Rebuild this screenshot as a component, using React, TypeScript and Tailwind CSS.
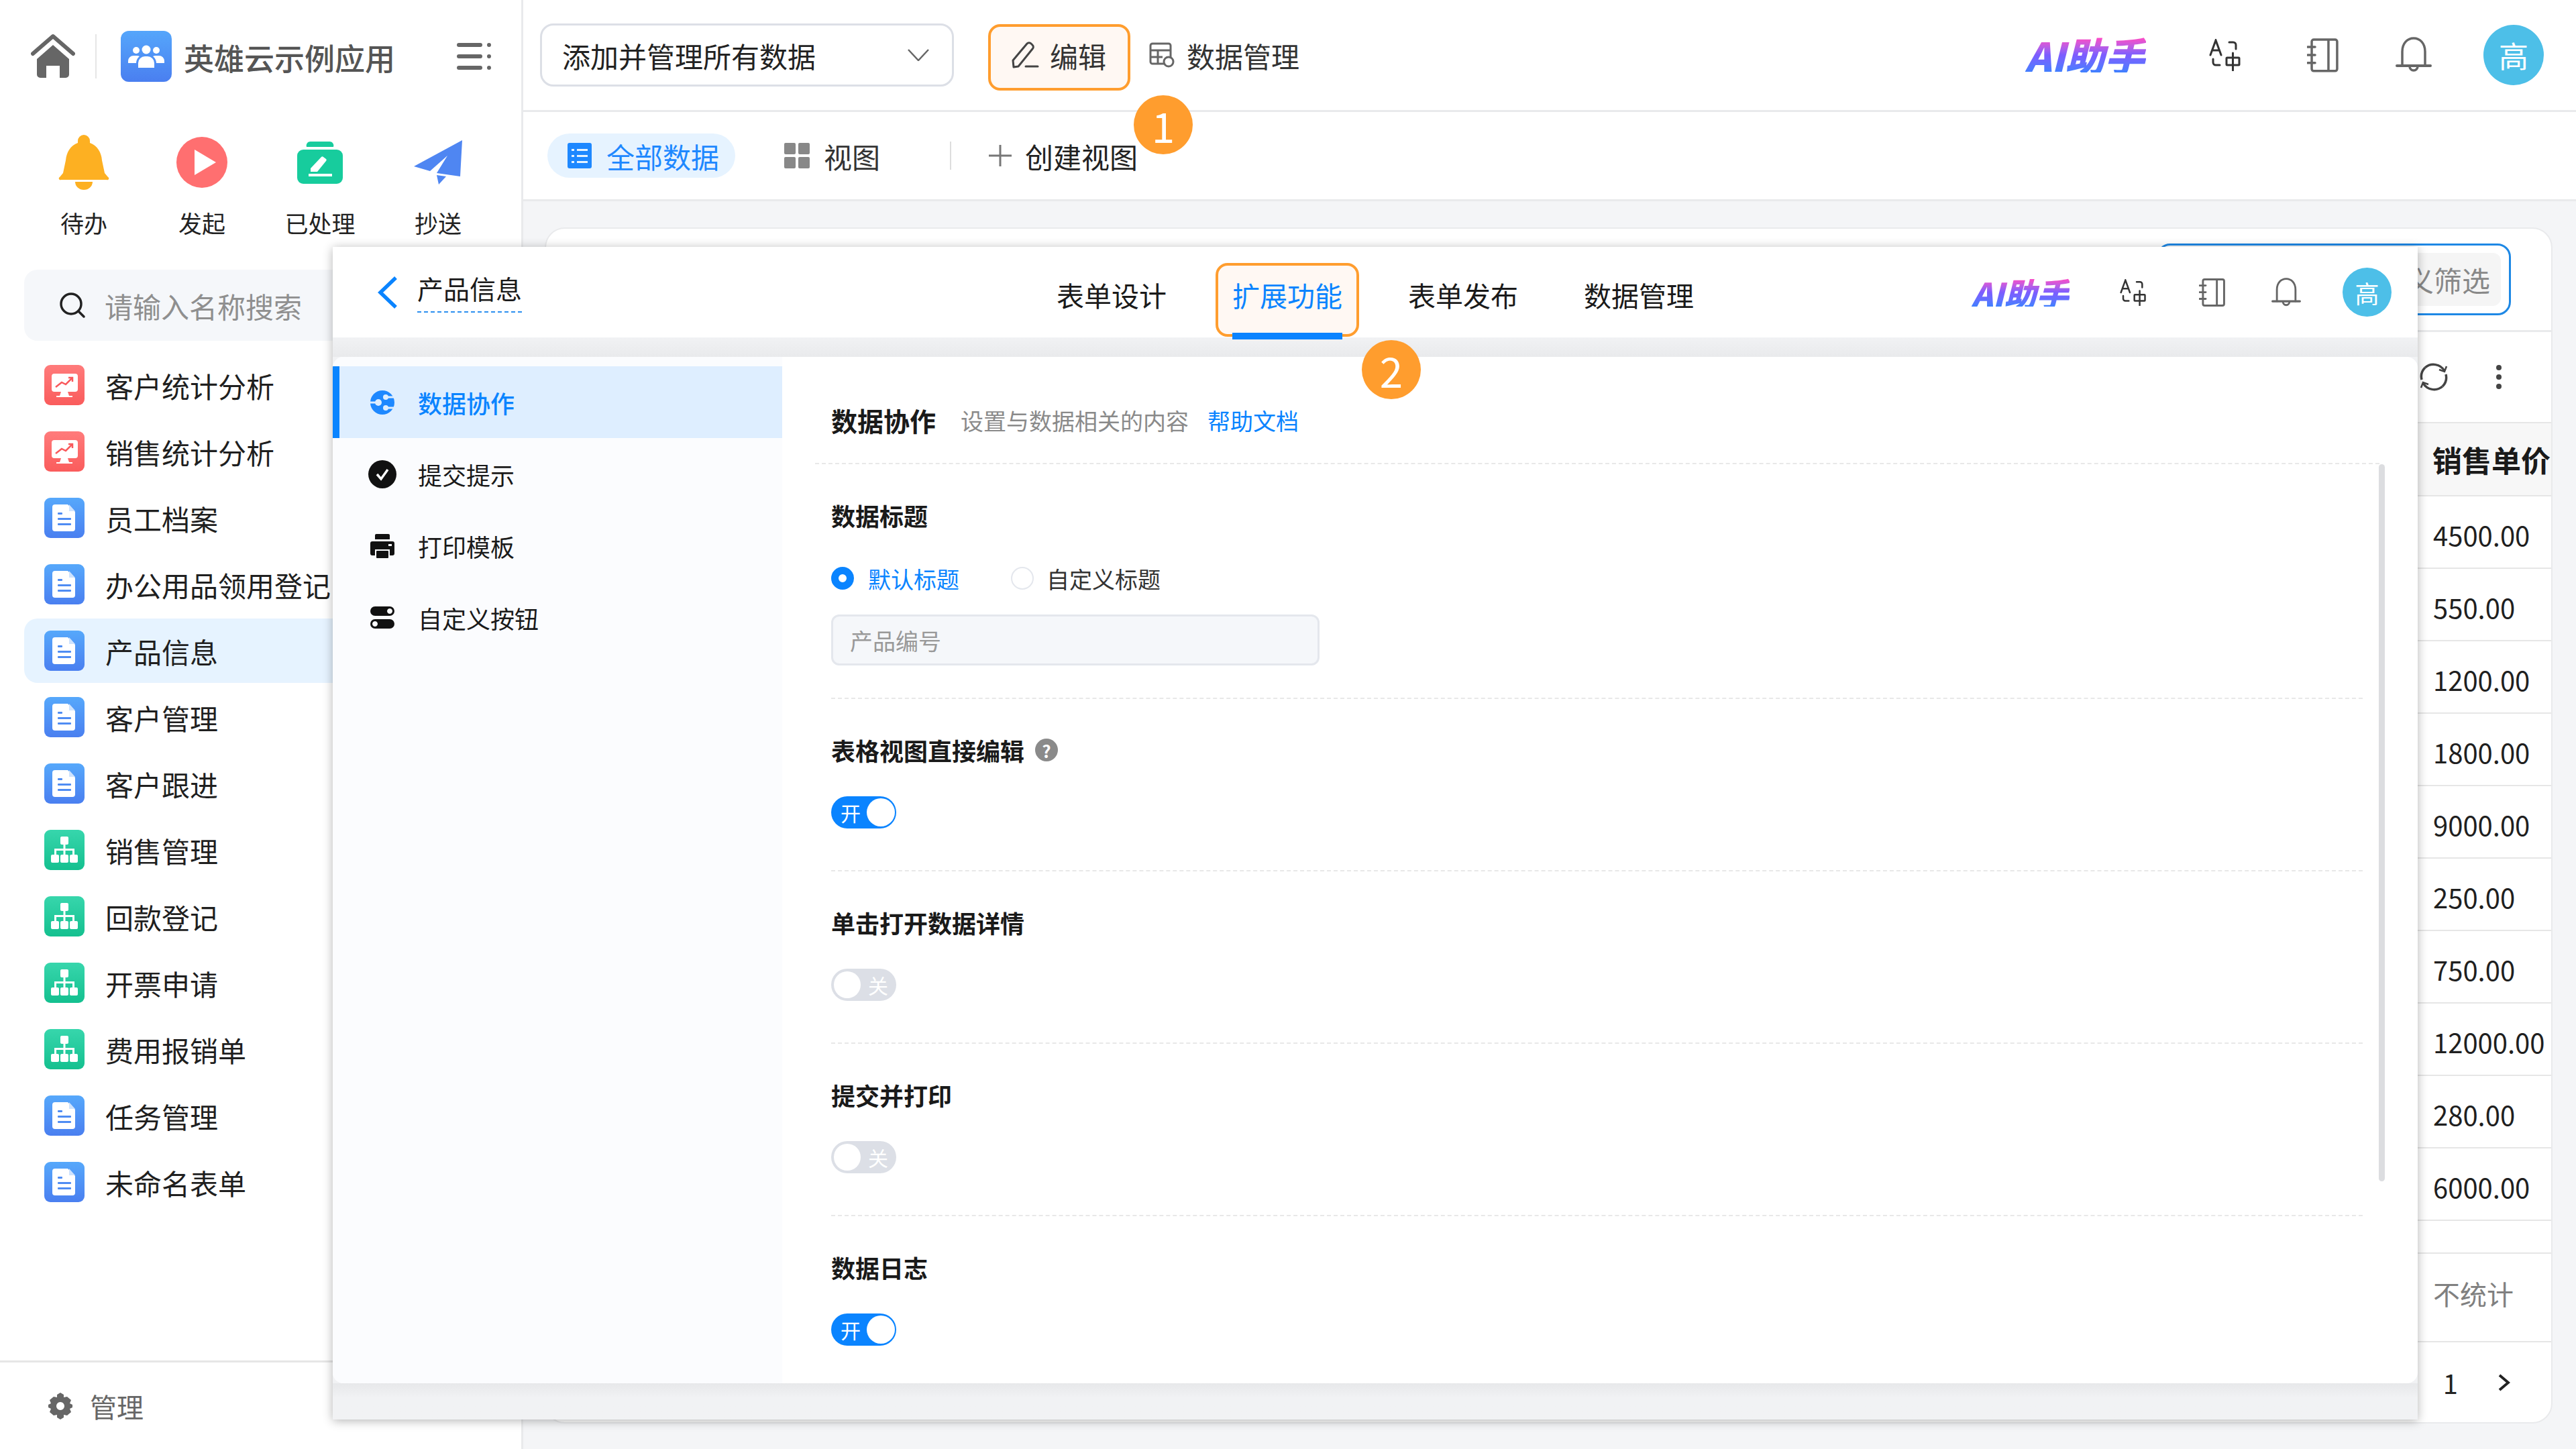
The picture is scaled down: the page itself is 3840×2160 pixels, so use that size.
const FONT = "font-['Noto_Sans_CJK_SC','Noto_Sans',sans-serif]";

function HomeIcon() {
  return (
    <svg width="66" height="68" viewBox="0 0 66 68" fill="#666">
      <path d="M3 30 L33 4 L63 30" fill="none" stroke="#666" strokeWidth="6" strokeLinecap="round" strokeLinejoin="round" />
      <path d="M9 38 L33 17 L57 38 V61 a5 5 0 0 1 -5 5 H43 V48 H23 V66 H14 a5 5 0 0 1 -5 -5 Z" />
    </svg>
  );
}

function AppLogo() {
  return (
    <svg width="76" height="76" viewBox="0 0 76 76">
      <defs>
        <linearGradient id="lg-app" x1="0" y1="0" x2="0" y2="1">
          <stop offset="0" stopColor="#55a6fb" />
          <stop offset="1" stopColor="#4a7ff0" />
        </linearGradient>
      </defs>
      <rect width="76" height="76" rx="12" fill="url(#lg-app)" />
      <g fill="#fff">
        <circle cx="38" cy="28" r="6.5" />
        <circle cx="23" cy="29" r="5" />
        <circle cx="53" cy="29" r="5" />
        <path d="M26 55 v-7 a10 10 0 0 1 10 -10 h4 a10 10 0 0 1 10 10 v7 Z" />
        <path d="M11 48 v-3 a8 8 0 0 1 8 -8 h5 a8 8 0 0 1 4 1 a13 13 0 0 0 -5 10 Z" />
        <path d="M65 48 v-3 a8 8 0 0 0 -8 -8 h-5 a8 8 0 0 0 -4 1 a13 13 0 0 1 5 10 Z" />
      </g>
    </svg>
  );
}

function MenuIcon() {
  return (
    <svg width="52" height="40" viewBox="0 0 52 40" fill="#666">
      <rect x="0" y="0" width="38" height="6" rx="3" />
      <rect x="0" y="17" width="38" height="6" rx="3" />
      <rect x="0" y="34" width="38" height="6" rx="3" />
      <circle cx="48" cy="3" r="3" />
      <circle cx="48" cy="20" r="3" />
      <circle cx="48" cy="37" r="3" />
    </svg>
  );
}

function BellFilled() {
  return (
    <svg width="76" height="82" viewBox="0 0 76 82" fill="#fdb022">
      <path d="M38 0 a9 9 0 0 1 9 9 v3 c11 4 17 14 18 26 l4 19 l5 6 a2 2 0 0 1 -2 4 H4 a2 2 0 0 1 -2 -4 l5 -6 l4 -19 c1 -12 7 -22 18 -26 V9 a9 9 0 0 1 9 -9 Z" />
      <path d="M25 70 H51 a13 12 0 0 1 -26 0 Z" />
    </svg>
  );
}

function PlayFilled() {
  return (
    <svg width="76" height="76" viewBox="0 0 76 76">
      <circle cx="38" cy="38" r="38" fill="#ff6f70" />
      <path d="M27 19 L59 38 L27 57 Z" fill="#fff" />
    </svg>
  );
}

function DoneFilled() {
  return (
    <svg width="68" height="64" viewBox="0 0 68 64">
      <path d="M14 9 a6 6 0 0 1 6 -8 h28 a6 6 0 0 1 6 8 Z" fill="#17cc9d" />
      <rect x="0" y="13" width="68" height="51" rx="9" fill="#17cc9d" />
      <path d="M20 41 L36 24 a2 2 0 0 1 3 0 l4 3 a2 2 0 0 1 0 3 L30 46 H20 Z" fill="#fff" />
      <rect x="17" y="49" width="35" height="4" fill="#fff" />
    </svg>
  );
}

function PlaneFilled() {
  return (
    <svg width="73" height="66" viewBox="0 0 73 66" fill="#4f86f2">
      <path d="M72 0 L0 39 L24 46 L50 23 L34 49 L69 54 Z" />
      <path d="M34 52 L48 54 L37 66 Z" />
    </svg>
  );
}

function ChartIcon() {
  return (
    <svg width="60" height="60" viewBox="0 0 60 60">
      <defs>
        <linearGradient id="lg-chart" x1="0" y1="0" x2="0" y2="1">
          <stop offset="0" stopColor="#ff7b7b" />
          <stop offset="1" stopColor="#fa5c5c" />
        </linearGradient>
      </defs>
      <rect width="60" height="60" rx="9" fill="url(#lg-chart)" />
      <rect x="11" y="13" width="39" height="27" rx="4" fill="#fff" />
      <path d="M25 40 h10 l2 6 h5 v2 H18 v-2 h5 Z" fill="#fff" />
      <path d="M17 33 L26 26 L32 29 L41 20" fill="none" stroke="#f9595c" strokeWidth="2.5" />
      <path d="M36 19 h6 v6" fill="none" stroke="#f9595c" strokeWidth="2.5" />
    </svg>
  );
}

function DocIcon() {
  return (
    <svg width="60" height="60" viewBox="0 0 60 60">
      <defs>
        <linearGradient id="lg-doc" x1="0" y1="0" x2="0" y2="1">
          <stop offset="0" stopColor="#56a8fb" />
          <stop offset="1" stopColor="#4a7ff0" />
        </linearGradient>
      </defs>
      <rect width="60" height="60" rx="9" fill="url(#lg-doc)" />
      <path d="M16 10 h19 l11 11 v25 a4 4 0 0 1 -4 4 H16 a4 4 0 0 1 -4 -4 V14 a4 4 0 0 1 4 -4 Z" fill="#fff" />
      <path d="M37 10 l9 10 h-9 Z" fill="#cfe3fd" />
      <g fill="#4f8cf3">
        <rect x="20" y="22" width="7" height="3" rx="1" />
        <rect x="20" y="30" width="20" height="3" rx="1" />
        <rect x="20" y="38" width="20" height="3" rx="1" />
      </g>
    </svg>
  );
}

function OrgIcon() {
  return (
    <svg width="60" height="60" viewBox="0 0 60 60">
      <defs>
        <linearGradient id="lg-org" x1="0" y1="0" x2="0" y2="1">
          <stop offset="0" stopColor="#37d6ac" />
          <stop offset="1" stopColor="#14c08f" />
        </linearGradient>
      </defs>
      <rect width="60" height="60" rx="9" fill="url(#lg-org)" />
      <g fill="#fff">
        <rect x="24" y="10" width="12" height="12" rx="2" />
        <rect x="10" y="37" width="12" height="12" rx="2" />
        <rect x="24" y="37" width="12" height="12" rx="2" />
        <rect x="38" y="37" width="12" height="12" rx="2" />
        <path d="M28.5 22 h3 v6 H45 v9 h-3 v-6 H31.5 v6 h-3 v-6 H18 v6 h-3 v-9 h13.5 Z" />
      </g>
    </svg>
  );
}

function TranslateIcon({ size }: { size: number }) {
  return (
    <svg width={size} height={size} viewBox="0 0 48 48" stroke="#333" fill="none" strokeWidth="3" strokeLinecap="round">
      <path d="M2 24 L10 2 L18 24 M5 17 H15" />
      <path d="M30 5 h6 a4 4 0 0 1 4 4 v6" />
      <path d="M6 30 v5 a4 4 0 0 0 4 4 h6" />
      <rect x="26" y="28" width="19" height="11" rx="1" />
      <path d="M35.5 21 V47" />
    </svg>
  );
}

function BookIcon({ size }: { size: number }) {
  return (
    <svg width={size} height={size * 1.1} viewBox="0 0 48 53" stroke="#666" fill="none" strokeWidth="3.5">
      <rect x="7" y="3" width="38" height="47" rx="3" />
      <path d="M32 3 V50" />
      <path d="M1 14 H12 M1 26 H12 M1 38 H12" strokeLinecap="round" />
    </svg>
  );
}

function BellOutline({ size }: { size: number }) {
  return (
    <svg width={size} height={size} viewBox="0 0 54 54" stroke="#666" fill="none" strokeWidth="3.5" strokeLinecap="round">
      <path d="M10 43 V22 C10 9 18 2 27 2 C36 2 44 9 44 22 V43" />
      <path d="M2 43 H52" strokeWidth="4" />
      <path d="M21 44 a6 6 0 0 0 12 0" />
    </svg>
  );
}

function AiBadge({ big }: { big?: boolean }) {
  return (
    <span className={`italic font-black whitespace-nowrap bg-gradient-to-b from-[#ff47c4] via-[#7b5cff] to-[#3d80ff] bg-clip-text text-transparent ${big ? "text-[59px] leading-[52px] w-[180px]" : "text-[48px] leading-[42px] w-[146px]"}`}>
      AI助手
    </span>
  );
}

function Avatar({ big }: { big?: boolean }) {
  return (
    <div className={`flex items-center justify-center rounded-full bg-[#4dbfe8] text-white ${big ? "w-[90px] h-[90px] text-[44px]" : "w-[73px] h-[73px] text-[36px]"}`}>高</div>
  );
}

function NumberBadge({ n, className }: { n: number; className: string }) {
  return (
    <div className={`absolute w-[88px] h-[88px] rounded-full bg-[#ff9d2e] text-white text-[62px] leading-none flex items-center justify-center ${className}`}>{n}</div>
  );
}

function Toggle({ on }: { on: boolean }) {
  return (
    <div className={`w-[97px] h-[48px] rounded-full flex items-center text-white text-[30px] ${on ? "bg-[#0a84ff] pl-[14px] pr-[2px] justify-between" : "bg-[#dcdfe6] pl-[4px] pr-[12px] justify-between"}`}>
      {on ? <span>开</span> : <span className="w-[40px] h-[40px] rounded-full bg-white" />}
      {on ? <span className="w-[42px] h-[42px] rounded-full bg-white" /> : <span>关</span>}
    </div>
  );
}

const menu = [
  { name: "客户统计分析", kind: "chart" },
  { name: "销售统计分析", kind: "chart" },
  { name: "员工档案", kind: "doc" },
  { name: "办公用品领用登记", kind: "doc" },
  { name: "产品信息", kind: "doc", active: true },
  { name: "客户管理", kind: "doc" },
  { name: "客户跟进", kind: "doc" },
  { name: "销售管理", kind: "org" },
  { name: "回款登记", kind: "org" },
  { name: "开票申请", kind: "org" },
  { name: "费用报销单", kind: "org" },
  { name: "任务管理", kind: "doc" },
  { name: "未命名表单", kind: "doc" },
];

const prices = ["4500.00", "550.00", "1200.00", "1800.00", "9000.00", "250.00", "750.00", "12000.00", "280.00", "6000.00"];

function Sidebar() {
  const quick = [
    { label: "待办", icon: <BellFilled /> },
    { label: "发起", icon: <PlayFilled /> },
    { label: "已处理", icon: <DoneFilled /> },
    { label: "抄送", icon: <PlaneFilled /> },
  ];
  return (
    <aside className="w-[780px] h-full shrink-0 bg-white border-r-[3px] border-[#e9eaec] flex flex-col">
      <div className="h-[167px] shrink-0 flex items-center pl-[46px]">
        <HomeIcon />
        <div className="w-[2px] h-[66px] bg-[#e6e6e6] ml-[30px] mr-[36px]" />
        <AppLogo />
        <span className="ml-[18px] pt-[4px] text-[45px] font-medium text-[#555]">英雄云示例应用</span>
        <div className="ml-[92px]"><MenuIcon /></div>
      </div>
      <div className="ml-[37px] w-[704px] grid grid-cols-4 pt-[34px]">
        {quick.map(q => (
          <div key={q.label} className="flex flex-col items-center">
            <div className="h-[82px] flex items-center justify-center">{q.icon}</div>
            <span className="mt-[27px] text-[35px] leading-[44px] text-[#222]">{q.label}</span>
          </div>
        ))}
      </div>
      <div className="mx-[36px] mt-[48px] h-[106px] shrink-0 rounded-[20px] bg-[#f5f7fa] flex items-center pl-[52px] gap-[28px]">
        <svg width="40" height="40" viewBox="0 0 40 40" fill="none" stroke="#222" strokeWidth="3.5" strokeLinecap="round">
          <circle cx="18" cy="18" r="15" />
          <path d="M29 29 L37 37" />
        </svg>
        <span className="text-[42px] text-[#8f8f8f]">请输入名称搜索</span>
      </div>
      <div className="mx-[36px] mt-[18px] flex flex-col gap-[3px] flex-1">
        {menu.map(m => (
          <div key={m.name} className={`h-[96px] shrink-0 flex items-center pl-[30px] gap-[31px] rounded-[20px] ${m.active ? "bg-[#e6f3ff]" : ""}`}>
            {m.kind === "chart" ? <ChartIcon /> : m.kind === "org" ? <OrgIcon /> : <DocIcon />}
            <span className="text-[42px] text-[#1f1f1f] whitespace-nowrap">{m.name}</span>
          </div>
        ))}
      </div>
      <div className="h-[132px] shrink-0 border-t-[3px] border-[#e6e6e6] flex items-center pl-[70px] gap-[24px] text-[#666]">
        <svg width="40" height="40" viewBox="0 0 40 40" fill="#666">
          <path fillRule="evenodd" d="M20 0 l5 3 v4 l5 -1 l6 5 l-2 5 l4 2 v4 l-4 2 l2 5 l-6 5 l-5 -1 v4 l-5 3 l-5 -3 v-4 l-5 1 l-6 -5 l2 -5 l-4 -2 v-4 l4 -2 l-2 -5 l6 -5 l5 1 V3 Z M20 14 a6 6 0 1 0 0.01 0 Z" />
        </svg>
        <span className="text-[40px]">管理</span>
      </div>
    </aside>
  );
}

function Topbar() {
  return (
    <>
      <header className="h-[167px] shrink-0 bg-white border-b-[3px] border-[#e9eaec] flex items-center pl-[25px] pr-[48px]">
        <div className="w-[617px] h-[94px] rounded-[20px] border-[3px] border-[#dcdfe6] flex items-center justify-between pl-[30px] pr-[34px]">
          <span className="text-[42px] text-[#222]">添加并管理所有数据</span>
          <svg width="32" height="18" viewBox="0 0 32 18" fill="none" stroke="#666" strokeWidth="2.5"><path d="M1 1 L16 17 L31 1" /></svg>
        </div>
        <div className="ml-[51px] mt-[6px] w-[212px] h-[99px] rounded-[18px] border-[4px] border-[#ff9d2e] bg-[#fff8f3] flex items-center pl-[30px] pb-[6px] gap-[16px]">
          <svg width="42" height="42" viewBox="0 0 42 42" fill="none" stroke="#444" strokeWidth="3" strokeLinejoin="round" strokeLinecap="round">
            <path d="M4 39 L3 29 L24 4 a4 4 0 0 1 6 0 l2 2 a4 4 0 0 1 0 6 L11 38 Z" />
            <path d="M22 38 H40" />
          </svg>
          <span className="text-[42px] text-[#333]">编辑</span>
        </div>
        <div className="ml-[28px] flex items-center gap-[18px]">
          <svg width="38" height="40" viewBox="0 0 38 40" fill="none" stroke="#666" strokeWidth="3">
            <rect x="2" y="3" width="30" height="30" rx="3" />
            <path d="M2 13 H32 M2 23 H20 M13 13 V33" />
            <circle cx="29" cy="30" r="7" fill="#fff" />
          </svg>
          <span className="text-[42px] text-[#333]">数据管理</span>
        </div>
        <div className="ml-auto flex items-center">
          <AiBadge big />
          <div className="ml-[94px]"><TranslateIcon size={48} /></div>
          <div className="ml-[98px]"><BookIcon size={48} /></div>
          <div className="ml-[84px]"><BellOutline size={54} /></div>
          <div className="ml-[77px]"><Avatar big /></div>
        </div>
      </header>
      <div className="h-[133px] shrink-0 bg-white border-b-[3px] border-[#e9eaec] flex items-center pl-[36px]">
        <div className="w-[280px] h-[66px] rounded-full bg-[#e6f3ff] flex items-center pl-[30px] gap-[22px]">
          <svg width="36" height="38" viewBox="0 0 36 38" fill="#1e88ff">
            <path fillRule="evenodd" d="M3 0 h30 a3 3 0 0 1 3 3 v32 a3 3 0 0 1 -3 3 H3 a3 3 0 0 1 -3 -3 V3 a3 3 0 0 1 3 -3 Z M6 9 v3 h4 V9 Z M14 9 v3 h16 V9 Z M6 18 v3 h4 v-3 Z M14 18 v3 h16 v-3 Z M6 27 v3 h4 v-3 Z M14 27 v3 h16 v-3 Z" />
          </svg>
          <span className="text-[42px] text-[#1e88ff]">全部数据</span>
        </div>
        <div className="ml-[73px] flex items-center gap-[21px]">
          <svg width="38" height="38" viewBox="0 0 38 38" fill="#888">
            <rect width="17" height="17" rx="2" />
            <rect x="21" width="17" height="17" rx="2" />
            <rect y="21" width="17" height="17" rx="2" />
            <rect x="21" y="21" width="17" height="17" rx="2" />
          </svg>
          <span className="text-[42px] text-[#333]">视图</span>
        </div>
        <div className="ml-[104px] w-[2px] h-[42px] bg-[#dddddd]" />
        <div className="ml-[56px] flex items-center gap-[20px]">
          <svg width="34" height="32" viewBox="0 0 34 32" stroke="#777" strokeWidth="3"><path d="M0 16 H34 M17 0 V32" /></svg>
          <span className="text-[42px] text-[#222]">创建视图</span>
        </div>
      </div>
    </>
  );
}

function DataCard() {
  return (
    <div className="h-[1783px] rounded-[30px] border-[2px] border-[#e9eaec] bg-white flex flex-col overflow-hidden">
      <div className="h-[154px] shrink-0 border-b-[3px] border-[#e9eaec] flex items-center justify-end pr-[60px]">
        <div className="w-[528px] h-[107px] rounded-[20px] border-[3px] border-[#1e88e5] flex items-center justify-end pr-[12px]">
          <div className="h-[79px] rounded-[12px] bg-[#f5f5f5] flex items-center pl-[104px] pr-[16px] text-[42px] text-[#888]">义筛选</div>
        </div>
      </div>
      <div className="h-[134px] shrink-0 flex items-center justify-end pr-[73px] gap-[70px]">
        <svg width="44" height="44" viewBox="0 0 44 44" fill="none" stroke="#444" strokeWidth="3.5">
          <path d="M38 13 A19 19 0 0 0 9 8" />
          <path d="M6 31 A19 19 0 0 0 35 36" />
          <path d="M4 26 A19 19 0 0 1 9 8" />
          <path d="M40 18 A19 19 0 0 1 35 36" />
          <path d="M41 6 L38 14 L30 11" strokeWidth="2.5" />
          <path d="M3 38 L6 30 L14 33" strokeWidth="2.5" />
        </svg>
        <svg width="10" height="38" viewBox="0 0 10 38" fill="#444"><circle cx="5" cy="5" r="4" /><circle cx="5" cy="19" r="4" /><circle cx="5" cy="33" r="4" /></svg>
      </div>
      <div className="h-[111px] shrink-0 bg-[#f7f7f7] border-y-[2px] border-[#e6e6e6] flex items-center justify-end">
        <span className="w-[177px] text-[44px] font-bold text-[#1a1a1a] whitespace-nowrap">销售单价</span>
      </div>
      {prices.map(p => (
        <div key={p} className="h-[108px] shrink-0 border-b-[2px] border-[#e6e6e6] flex items-center justify-end pt-[7px]">
          <span className="w-[176px] text-[40px] text-[#1f1f1f]">{p}</span>
        </div>
      ))}
      <div className="h-[49px] shrink-0 border-b-[2px] border-[#e6e6e6]" />
      <div className="h-[132px] shrink-0 border-b-[2px] border-[#e6e6e6] flex items-center justify-end pb-[12px]">
        <span className="w-[176px] text-[40px] text-[#808080]">不统计</span>
      </div>
      <div className="flex-1 flex items-center justify-end pr-[61px] gap-[60px] text-[40px] text-[#222]">
        <span>1</span>
        <svg width="18" height="26" viewBox="0 0 18 26" fill="none" stroke="#222" strokeWidth="4"><path d="M2 2 L15 13 L2 24" /></svg>
      </div>
    </div>
  );
}

function Section({ title, on, help }: { title: string; on: boolean; help?: boolean }) {
  return (
    <div className="h-[257px] shrink-0 border-b-[2px] border-dashed border-[#e8e8e8] pt-[56px] last-of-type:border-b-0">
      <div className="flex items-center gap-[16px] h-[40px]">
        <span className="text-[36px] font-bold text-[#1a1a1a] leading-[40px]">{title}</span>
        {help && <span className="w-[34px] h-[34px] rounded-full bg-[#8a8a8a] text-white text-[26px] font-bold flex items-center justify-center">?</span>}
      </div>
      <div className="mt-[49px]"><Toggle on={on} /></div>
    </div>
  );
}

function SidePanelIcon({ kind }: { kind: string }) {
  if (kind === "collab") {
    return (
      <svg width="40" height="36" viewBox="0 0 40 36">
        <circle cx="20" cy="18" r="18" fill="#1e88ff" />
        <path d="M0 18 H13 M26 10 H40 M26 26 H40" stroke="#deeeff" strokeWidth="3" />
        <circle cx="14" cy="18" r="5" fill="#deeeff" />
        <circle cx="25" cy="10" r="4" fill="#deeeff" />
        <circle cx="25" cy="26" r="4" fill="#deeeff" />
      </svg>
    );
  }
  if (kind === "check") {
    return (
      <svg width="42" height="42" viewBox="0 0 42 42">
        <circle cx="21" cy="21" r="21" fill="#111" />
        <path d="M13 21 L19 28 L29 14" fill="none" stroke="#fff" strokeWidth="3.5" />
      </svg>
    );
  }
  if (kind === "print") {
    return (
      <svg width="36" height="36" viewBox="0 0 36 36" fill="#111">
        <path d="M9 0 h18 a2 2 0 0 1 2 2 v6 H7 V2 a2 2 0 0 1 2 -2 Z" />
        <path fillRule="evenodd" d="M3 11 h30 a3 3 0 0 1 3 3 v15 a3 3 0 0 1 -3 3 h-4 v-9 H7 v9 H3 a3 3 0 0 1 -3 -3 V14 a3 3 0 0 1 3 -3 Z M27 15 v3 h5 v-3 Z" />
        <rect x="9" y="25" width="18" height="11" rx="1" />
      </svg>
    );
  }
  return (
    <svg width="36" height="34" viewBox="0 0 36 34" fill="#111">
      <path fillRule="evenodd" d="M7 0 h22 a7 7 0 0 1 0 14 H7 a7 7 0 0 1 0 -14 Z M29 3 a4 4 0 1 0 0.01 0 Z" />
      <path fillRule="evenodd" d="M7 19 h22 a7 7 0 0 1 0 14 H7 a7 7 0 0 1 0 -14 Z M7 22 a4 4 0 1 0 0.01 0 Z" />
    </svg>
  );
}

function FormSettings() {
  const items = [
    { label: "数据协作", kind: "collab", active: true },
    { label: "提交提示", kind: "check" },
    { label: "打印模板", kind: "print" },
    { label: "自定义按钮", kind: "toggle" },
  ];
  return (
    <div className="absolute left-[496px] top-[368px] w-[3108px] h-[1748px] bg-[#f1f2f4] flex flex-col shadow-[0_2px_14px_rgba(0,0,0,0.3)]">
      <div className="h-[135px] shrink-0 bg-white flex items-center relative pr-[39px]">
        <svg className="ml-[67px]" width="30" height="48" viewBox="0 0 30 48" fill="none" stroke="#0a84ff" strokeWidth="5.5"><path d="M27 2 L4 24 L27 46" /></svg>
        <div className="ml-[29px] h-[60px] border-b-[2px] border-dashed border-[#2b8ff0]">
          <span className="block text-[39px] leading-[50px] text-[#1a1a1a] mt-[-2px]">产品信息</span>
        </div>
        <span className="ml-[797px] pt-[8px] text-[41px] text-[#1a1a1a]">表单设计</span>
        <div className="ml-[73px] self-start mt-[24px] relative h-[110px] w-[214px] rounded-[18px] border-[4px] border-[#ff9d2e] bg-[#fff8f3] flex items-center justify-center pb-[14px] text-[41px] text-[#0a84ff]">
          <span>扩展功能</span>
          <div className="absolute left-[21px] right-[21px] bottom-[-8px] h-[10px] bg-[#0a84ff]" />
        </div>
        <span className="ml-[73px] pt-[8px] text-[41px] text-[#1a1a1a]">表单发布</span>
        <span className="ml-[98px] pt-[8px] text-[41px] text-[#1a1a1a]">数据管理</span>
        <div className="ml-auto flex items-center">
          <AiBadge />
          <div className="ml-[75px]"><TranslateIcon size={40} /></div>
          <div className="ml-[78px]"><BookIcon size={40} /></div>
          <div className="ml-[68px]"><BellOutline size={44} /></div>
          <div className="ml-[62px]"><Avatar /></div>
        </div>
      </div>
      <div className="h-[29px] shrink-0 bg-gradient-to-b from-[#f1f2f4] to-[#e9eaec]" />
      <div className="h-[1530px] shrink-0 bg-white rounded-[16px] flex overflow-hidden">
        <div className="w-[670px] shrink-0 bg-[#fbfcfe] pt-[14px]">
          {items.map(it => (
            <div key={it.label} className={`h-[107px] flex items-center ${it.active ? "bg-[#deeeff] border-l-[10px] border-[#0a84ff] pl-[43px]" : "pl-[53px]"}`}>
              <div className="w-[42px] flex justify-center"><SidePanelIcon kind={it.kind} /></div>
              <span className={`ml-[32px] text-[36px] ${it.active ? "text-[#0a84ff] font-medium" : "text-[#1a1a1a]"}`}>{it.label}</span>
            </div>
          ))}
        </div>
        <div className="flex-1 pl-[49px]">
          <div className="h-[160px] w-[2332px] border-b-[2px] border-dashed border-[#e8e8e8] pl-[24px] pt-[30px] flex items-center">
            <span className="text-[39px] font-bold text-[#1a1a1a]">数据协作</span>
            <span className="ml-[37px] text-[34px] text-[#8a8a8a]">设置与数据相关的内容</span>
            <span className="ml-[28px] text-[34px] text-[#0a84ff]">帮助文档</span>
          </div>
          <div className="relative ml-[24px] w-[2283px] flex flex-col">
            <div className="h-[350px] shrink-0 border-b-[2px] border-dashed border-[#e8e8e8] pt-[56px]">
              <div className="text-[36px] font-bold text-[#1a1a1a] leading-[40px]">数据标题</div>
              <div className="mt-[54px] h-[40px] flex items-center text-[34px]">
                <span className="w-[34px] h-[34px] rounded-full border-[11px] border-[#0a84ff] bg-white" />
                <span className="ml-[21px] text-[#0a84ff]">默认标题</span>
                <span className="ml-[77px] w-[34px] h-[34px] rounded-full border-[2px] border-[#e4e7ed]" />
                <span className="ml-[19px] text-[#333]">自定义标题</span>
              </div>
              <div className="mt-[34px] w-[728px] h-[76px] rounded-[12px] bg-[#f5f7fa] border-[3px] border-[#e4e7ed] flex items-center pl-[25px] text-[34px] text-[#999]">产品编号</div>
            </div>
            <Section title="表格视图直接编辑" on help />
            <Section title="单击打开数据详情" on={false} />
            <Section title="提交并打印" on={false} />
            <Section title="数据日志" on />
            <div className="absolute left-[2307px] top-0 w-[9px] h-[1069px] rounded-full bg-[#dcdde0]" />
          </div>
        </div>
      </div>
      <div className="flex-1 bg-gradient-to-b from-[#e7e8ea] to-[#f1f2f4] to-40%" />
    </div>
  );
}

export default function App() {
  return (
    <div className={`relative w-[3840px] h-[2160px] overflow-hidden bg-[#f4f5f7] flex ${FONT}`}>
      <Sidebar />
      <main className="flex-1 flex flex-col min-w-0">
        <Topbar />
        <div className="flex-1 pl-[32px] pr-[35px] pt-[39px]">
          <DataCard />
        </div>
      </main>
      <FormSettings />
      <NumberBadge n={1} className="left-[1690px] top-[142px]" />
      <NumberBadge n={2} className="left-[2030px] top-[507px]" />
    </div>
  );
}
